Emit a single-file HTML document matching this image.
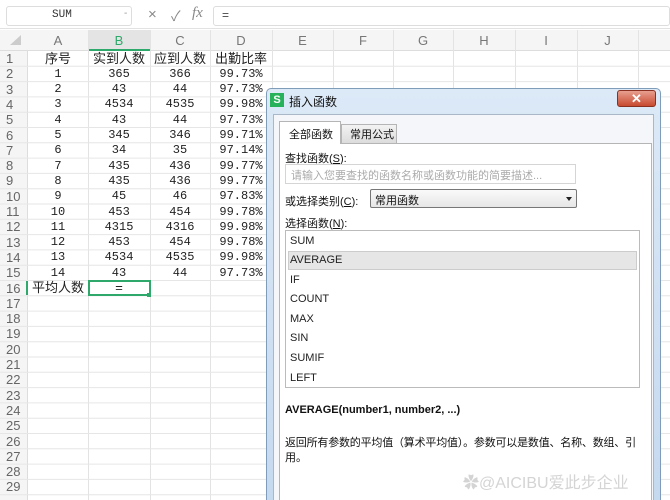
<!DOCTYPE html>
<html style="width:670px;height:500px;overflow:hidden"><head><meta charset="utf-8"><style>
*{margin:0;padding:0;box-sizing:border-box}
body{width:670px;height:500px;overflow:hidden;background:#fff;font-family:"Liberation Sans","Noto Sans CJK SC",sans-serif;position:relative}
.a{position:absolute}
.cell{position:absolute;font-family:"Liberation Mono","Noto Sans CJK SC",monospace;font-size:12px;color:#222;text-align:center;line-height:15px;height:15px}
.rh{position:absolute;left:0;width:27px;font-size:13px;color:#666;text-align:left;padding-left:6px;line-height:15px}
.ch{position:absolute;top:31px;font-size:13px;color:#777;text-align:center;line-height:19px}
.dl{font-size:11px;color:#111;position:absolute;font-family:"Liberation Sans","Noto Sans CJK SC",sans-serif}
.li{position:absolute;left:290px;font-size:11px;color:#222}
</style></head><body>
<div class="a" style="left:0;top:0;width:670px;height:29px;background:#fff;border-bottom:1px solid #e2e2e2"></div>
<div class="a" style="left:6px;top:6px;width:126px;height:20px;border:1px solid #ddd;border-radius:3px"></div>
<div class="a" style="left:52px;top:9px;font-family:'Liberation Mono',monospace;font-size:11px;color:#333">SUM</div>
<div class="a" style="left:124px;top:8px;font-size:10px;color:#999">-</div>
<div class="a" style="left:148px;top:6px;font-size:15px;color:#888">×</div>
<div class="a" style="left:171px;top:6px;font-size:14px;color:#888">✓</div>
<div class="a" style="left:192px;top:5px;font-size:15px;color:#888;font-style:italic;font-family:'Liberation Serif',serif">fx</div>
<div class="a" style="left:213px;top:6px;width:457px;height:20px;border:1px solid #ddd;border-radius:3px"></div>
<div class="a" style="left:222px;top:8px;font-size:12px;color:#444">=</div>
<div class="a" style="left:0;top:30px;width:670px;height:21px;background:#f5f5f5;border-bottom:1px solid #ddd"></div>
<div class="a" style="left:88px;top:30px;width:62px;height:21px;background:#e4e4e4;border-bottom:2px solid #2fa86c"></div>
<div class="a" style="left:0;top:51px;width:28px;height:449px;background:#f5f5f5;border-right:1px solid #ddd"></div>
<svg class="a" style="left:0;top:0" width="670" height="500">
<g stroke="#e3e3e3" stroke-width="1">
<line x1="88.5" y1="30" x2="88.5" y2="500"/><line x1="150.5" y1="30" x2="150.5" y2="500"/><line x1="210.5" y1="30" x2="210.5" y2="500"/><line x1="272.5" y1="30" x2="272.5" y2="500"/><line x1="333.5" y1="30" x2="333.5" y2="500"/><line x1="393.5" y1="30" x2="393.5" y2="500"/><line x1="453.5" y1="30" x2="453.5" y2="500"/><line x1="515.5" y1="30" x2="515.5" y2="500"/><line x1="577.5" y1="30" x2="577.5" y2="500"/><line x1="638.5" y1="30" x2="638.5" y2="500"/>
</g>
<g stroke="#e6e6e6" id="hl"></g>
<path d="M10 45 L21 35 L21 45Z" fill="#ccc"/>
</svg>
<div id="grid"></div>
<div class="ch" style="left:28px;width:60px">A</div><div class="ch" style="left:88px;width:62px;color:#2fa86c">B</div><div class="ch" style="left:150px;width:60px">C</div><div class="ch" style="left:210px;width:62px">D</div><div class="ch" style="left:272px;width:61px">E</div><div class="ch" style="left:333px;width:60px">F</div><div class="ch" style="left:393px;width:60px">G</div><div class="ch" style="left:453px;width:62px">H</div><div class="ch" style="left:515px;width:62px">I</div><div class="ch" style="left:577px;width:61px">J</div>
<div class="a" style="left:88px;top:280px;width:63px;height:16px;border:2px solid #2fa86c"></div>
<div class="a" style="left:147px;top:293px;width:4px;height:4px;background:#2fa86c"></div>
<div class="a" style="left:26px;top:281px;width:2px;height:14px;background:#2fa86c"></div>
<script>
var data=[["序号","实到人数","应到人数","出勤比率"],["1","365","366","99.73%"],["2","43","44","97.73%"],["3","4534","4535","99.98%"],["4","43","44","97.73%"],["5","345","346","99.71%"],["6","34","35","97.14%"],["7","435","436","99.77%"],["8","435","436","99.77%"],["9","45","46","97.83%"],["10","453","454","99.78%"],["11","4315","4316","99.98%"],["12","453","454","99.78%"],["13","4534","4535","99.98%"],["14","43","44","97.73%"],["平均人数","=","",""]];
var xs=[[28,60],[88,62],[150,60],[210,62]],h="",svg="";
for(var r=0;r<29;r++){var y=51+r*15.3;h+='<div class="rh" style="top:'+(y)+'px">'+(r+1)+'</div>';svg+='<line x1="0" y1="'+(y+15.3).toFixed(1)+'" x2="670" y2="'+(y+15.3).toFixed(1)+'"/>';
if(r<16)for(var c=0;c<4;c++)h+='<div class="cell" style="left:'+xs[c][0]+'px;width:'+xs[c][1]+'px;top:'+(y+0.5)+'px;'+(r==0||r==15?'font-size:13px':'')+'">'+data[r][c]+'</div>';}
document.getElementById('grid').innerHTML=h;document.getElementById('hl').innerHTML=svg;
</script>
<div class="a" style="left:266px;top:88px;width:395px;height:412px;background:linear-gradient(#dce9f7,#c5d9ef);border:1px solid #7f9db9;border-bottom:none;border-radius:5px 5px 0 0"></div>
<div class="a" style="left:270px;top:93px;width:14px;height:14px;background:#27b15b;color:#fff;font-size:11px;font-weight:bold;text-align:center;line-height:14px">S</div>
<div class="dl" style="left:289px;top:93px;font-size:12px">插入函数</div>
<div class="a" style="left:617px;top:90px;width:39px;height:17px;background:linear-gradient(#e8a090,#c84a30);border:1px solid #8a3020;border-radius:3px;color:#fff;font-size:13px;font-weight:bold;text-align:center;line-height:15px">✕</div>
<div class="a" style="left:273px;top:114px;width:381px;height:386px;background:#f4f6f9;border:1px solid #a9b8c9;border-bottom:none"></div>
<div class="a" style="left:279px;top:143px;width:373px;height:357px;background:#fff;border:1px solid #b5b5b5;border-bottom:none"></div>
<div class="a" style="left:279px;top:121px;width:62px;height:23px;background:#fff;border:1px solid #b5b5b5;border-bottom:none"></div>
<div class="dl" style="left:289px;top:126px">全部函数</div>
<div class="a" style="left:341px;top:124px;width:56px;height:19px;background:linear-gradient(#f3f3f3,#dcdcdc);border:1px solid #b5b5b5;border-bottom:none"></div>
<div class="dl" style="left:350px;top:126px">常用公式</div>
<div class="dl" style="left:285px;top:150px">查找函数(<u>S</u>):</div>
<div class="a" style="left:285px;top:164px;width:291px;height:20px;border:1px solid #d5d5d5;background:#fff"></div>
<div class="dl" style="left:291px;top:167px;color:#aaa">请输入您要查找的函数名称或函数功能的简要描述...</div>
<div class="dl" style="left:285px;top:193px">或选择类别(<u>C</u>):</div>
<div class="a" style="left:370px;top:189px;width:207px;height:19px;border:1px solid #777;border-radius:2px;background:linear-gradient(#fafafa,#e6e6e6)"></div>
<div class="dl" style="left:375px;top:192px">常用函数</div>
<div class="a" style="left:566px;top:197px;border:3px solid transparent;border-top:4px solid #222"></div>
<div class="dl" style="left:285px;top:215px">选择函数(<u>N</u>):</div>
<div class="a" style="left:285px;top:230px;width:355px;height:158px;border:1px solid #bbb;background:#fff"></div>
<div class="a" style="left:288px;top:251px;width:349px;height:19px;background:#e6e6e6;border:1px solid #ccc"></div>
<div class="li" style="top:235px">SUM</div><div class="li" style="top:254px">AVERAGE</div><div class="li" style="top:274px">IF</div><div class="li" style="top:293px">COUNT</div><div class="li" style="top:313px">MAX</div><div class="li" style="top:332px">SIN</div><div class="li" style="top:352px">SUMIF</div><div class="li" style="top:372px">LEFT</div>
<div class="dl" style="left:285px;top:404px;font-weight:bold">AVERAGE(number1, number2, ...)</div>
<div class="dl" style="left:285px;top:434px;font-size:11px;letter-spacing:-0.2px">返回所有参数的平均值（算术平均值）。参数可以是数值、名称、数组、引</div>
<div class="dl" style="left:285px;top:449px">用。</div>
<div class="a" style="left:463px;top:469px;font-size:16px;color:rgba(170,170,170,0.5);font-family:'Liberation Sans','Noto Sans CJK SC',sans-serif">✿@AICIBU爱此步企业</div>
</body></html>
